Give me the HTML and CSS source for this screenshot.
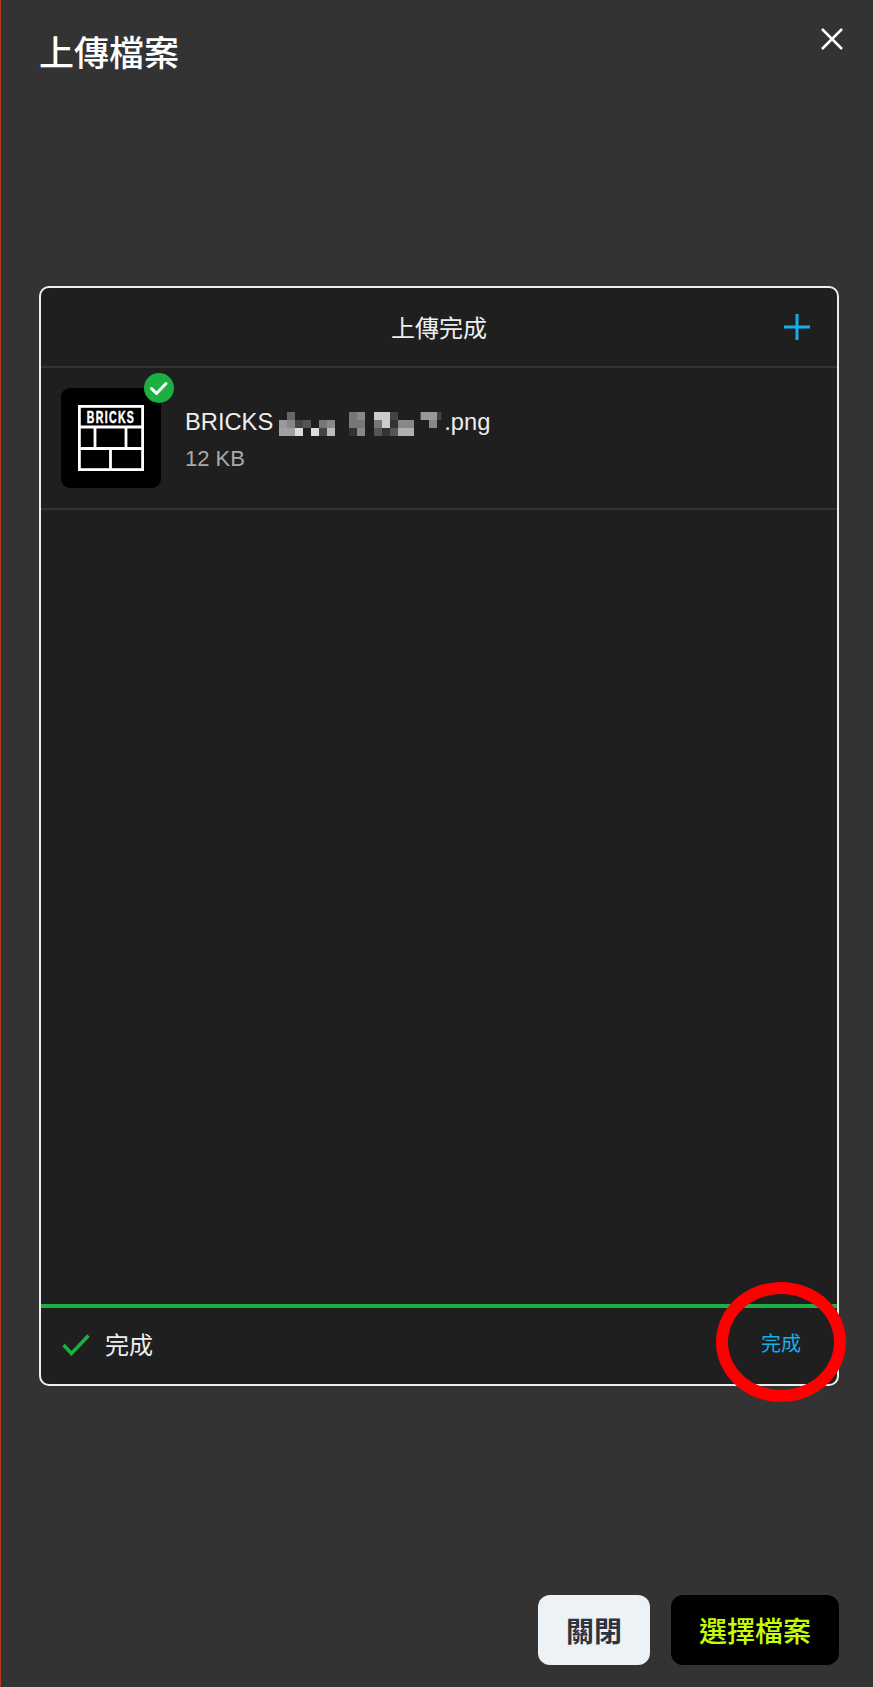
FILE: index.html
```html
<!DOCTYPE html>
<html lang="zh-Hant">
<head>
<meta charset="utf-8">
<title>上傳檔案</title>
<link rel="stylesheet" href="styles.css">
</head>
<body>
<div class="modal">
  <header class="modal-header">
    <h1 class="modal-title">上傳檔案</h1>
    <svg class="close-icon" viewBox="0 0 22 22" aria-label="關閉"><path d="M1 1 21 21M21 1 1 21"/></svg>
  </header>
  <section class="panel">
    <div class="panel-head">
      <span class="panel-title">上傳完成</span>
      <svg class="plus-icon" viewBox="0 0 26 26"><path d="M13 0V26M0 13H26"/></svg>
    </div>
    <div class="file-row">
      <div class="thumb">
        <svg class="logo" viewBox="0 0 66 66">
          <rect class="logo-line" x="1.4" y="1.4" width="63.2" height="63.2"/>
          <path class="logo-line" d="M1 22H65M1 43.500H65M17 22V43.500M48 22V43.500M32.500 43.500V65"/>
          <text class="logo-text" transform="scale(0.66 1)" x="50" y="18" text-anchor="middle">BRICKS</text>
        </svg>
        <svg class="badge" viewBox="0 0 30 30"><circle class="badge-bg" cx="15" cy="15" r="15"/><path class="badge-check" d="M7.500 15.500 12.500 20.500 22 10.500"/></svg>
      </div>
      <div class="file-info">
        <div class="file-name">
          <span>BRICKS</span>
          <svg class="mosaic" viewBox="0 0 495 72">
            <g fill="#666"><rect x="24" y="0" width="24" height="24"/></g>
            <rect x="210" y="0" width="24" height="24" fill="#777"/><rect x="234" y="0" width="24" height="24" fill="#888"/>
            <rect x="285" y="0" width="48" height="24" fill="#ccc"/><rect x="333" y="0" width="24" height="24" fill="#444"/>
            <rect x="425" y="0" width="50" height="24" fill="#999"/><rect x="475" y="0" width="12" height="24" fill="#444"/>
            <rect x="0" y="24" width="24" height="24" fill="#999"/><rect x="24" y="24" width="24" height="24" fill="#888"/>
            <rect x="48" y="24" width="24" height="24" fill="#444"/><rect x="72" y="24" width="24" height="24" fill="#555"/>
            <rect x="120" y="24" width="24" height="24" fill="#777"/><rect x="144" y="24" width="24" height="24" fill="#888"/>
            <rect x="210" y="24" width="48" height="24" fill="#777"/><rect x="285" y="24" width="24" height="24" fill="#777"/>
            <rect x="309" y="24" width="24" height="24" fill="#ccc"/><rect x="333" y="24" width="24" height="24" fill="#333"/>
            <rect x="357" y="24" width="48" height="24" fill="#888"/><rect x="450" y="24" width="24" height="24" fill="#888"/>
            <rect x="0" y="48" width="48" height="24" fill="#a0a0a0"/><rect x="48" y="48" width="24" height="24" fill="#ddd"/>
            <rect x="96" y="48" width="24" height="24" fill="#ddd"/><rect x="120" y="48" width="24" height="24" fill="#444"/>
            <rect x="144" y="48" width="24" height="24" fill="#bbb"/><rect x="210" y="48" width="24" height="24" fill="#333"/>
            <rect x="234" y="48" width="24" height="24" fill="#888"/><rect x="285" y="48" width="24" height="24" fill="#555"/>
            <rect x="309" y="48" width="24" height="24" fill="#333"/><rect x="333" y="48" width="24" height="24" fill="#555"/>
            <rect x="357" y="48" width="48" height="24" fill="#b0b0b0"/>
          </svg>
          <span>.png</span>
        </div>
        <div class="file-size">12 KB</div>
      </div>
    </div>
    <div class="panel-body"></div>
    <div class="progress"></div>
    <div class="panel-foot">
      <svg class="done-icon" viewBox="0 0 28 22"><path d="M1.500 11 9.500 19.500 26.500 1.500"/></svg>
      <span class="done-text">完成</span>
      <span class="done-link">完成</span>
    </div>
    <div class="ring"></div>
  </section>
  <footer class="actions">
    <button class="btn btn-close">關閉</button>
    <button class="btn btn-select">選擇檔案</button>
  </footer>
</div>
</body>
</html>
```

FILE: styles.css
```css
* {
  box-sizing: border-box;
}

html,
body {
  margin: 0;
  padding: 0;
}

body {
  background: #333;
  font-family: "Liberation Sans", "Noto Sans CJK TC", sans-serif;
}

.modal {
  height: 1687px;
  border-left: 1px solid #b5391c;
  background: #333;
  display: flex;
  flex-direction: column;
}

.modal-header {
  height: 286px;
  flex: none;
  display: flex;
  justify-content: space-between;
  align-items: flex-start;
  padding: 27px 30px 0 38px;
}

.close-icon {
  margin-top: 1px;
  width: 22px;
  height: 22px;
  fill: none;
  stroke: #fff;
  stroke-width: 2.500;
}

.modal-title {
  margin: 0;
  color: #fff;
  font-family: "Noto Sans CJK TC", sans-serif;
  font-size: 35px;
  font-weight: 500;
  line-height: 48px;
}

.panel {
  position: relative;
  flex: none;
  width: 800px;
  height: 1100px;
  margin-left: 38px;
  background: #1f1f1f;
  border: 2px solid #eee;
  border-radius: 10px;
  display: flex;
  flex-direction: column;
}

.panel-head {
  position: relative;
  height: 80px;
  flex: none;
  border-bottom: 2px solid #333;
  display: flex;
  align-items: center;
  justify-content: center;
}

.panel-title {
  color: #eee;
  font-family: "Noto Sans CJK TC", sans-serif;
  font-size: 24px;
  line-height: 34px;
}

.plus-icon {
  position: absolute;
  right: 27px;
  top: 26px;
  width: 26px;
  height: 26px;
  fill: none;
  stroke: #12b0e8;
  stroke-width: 3;
}

.file-row {
  height: 142px;
  flex: none;
  border-bottom: 2px solid #333;
  display: flex;
  align-items: flex-start;
  padding: 20px 20px 0;
  gap: 24px;
}

.thumb {
  position: relative;
  width: 100px;
  height: 100px;
  flex: none;
  background: #000;
  border-radius: 9px;
  display: flex;
  align-items: center;
  justify-content: center;
}

.logo {
  width: 66px;
  height: 66px;
}

.logo-line {
  fill: none;
  stroke: #fff;
  stroke-width: 2.800;
}

.logo-text {
  fill: #fff;
  stroke: #fff;
  stroke-width: 0.5;
  font-family: "Liberation Sans", sans-serif;
  font-size: 16px;
  font-weight: 700;
  letter-spacing: 2px;
}

.badge {
  position: absolute;
  right: -13px;
  top: -15px;
  width: 30px;
  height: 30px;
}

.badge-bg {
  fill: #1cb041;
}

.badge-check {
  fill: none;
  stroke: #fff;
  stroke-width: 3;
  stroke-linecap: round;
  stroke-linejoin: round;
}

.file-info {
  padding-top: 18px;
}

.file-name {
  display: flex;
  align-items: center;
  color: #eee;
  font-size: 23.700px;
  line-height: 32px;
}

.mosaic {
  width: 165px;
  height: 24px;
  margin-left: 6px;
  margin-top: 3px;
  filter: blur(0.7px);
}

.file-size {
  margin-top: 7px;
  color: #aaa;
  font-size: 22px;
  line-height: 28px;
}

.panel-body {
  flex: 1;
}

.progress {
  height: 4px;
  flex: none;
  background: #1cb041;
}

.panel-foot {
  height: 76px;
  flex: none;
  display: flex;
  align-items: center;
  padding: 0 36px 0 21px;
  color: #eee;
}

.done-icon {
  width: 28px;
  height: 22px;
  flex: none;
  margin-bottom: 2px;
  fill: none;
  stroke: #1cb041;
  stroke-width: 3.500;
}

.done-text {
  margin-left: 15px;
  margin-bottom: 6px;
  font-family: "Noto Sans CJK TC", sans-serif;
  font-size: 24px;
}

.done-link {
  margin-left: auto;
  margin-bottom: 8px;
  color: #12b0e8;
  font-family: "Noto Sans CJK TC", sans-serif;
  font-size: 20px;
}

.ring {
  position: absolute;
  right: -9px;
  bottom: -18px;
  width: 130px;
  height: 120px;
  border: 12px solid #f00;
  border-radius: 50%;
}

.actions {
  margin-top: auto;
  padding: 0 34px 22px 0;
  display: flex;
  justify-content: flex-end;
  gap: 21px;
}

.btn {
  height: 70px;
  border: 0;
  border-radius: 12px;
  font-family: "Noto Sans CJK TC", sans-serif;
  font-size: 28px;
  padding: 0;
}

.btn-close {
  width: 112px;
  background: #edf2f7;
  color: #2d3440;
  font-weight: 700;
}

.btn-select {
  width: 168px;
  background: #000;
  color: #c6ff00;
  font-weight: 500;
}
```
